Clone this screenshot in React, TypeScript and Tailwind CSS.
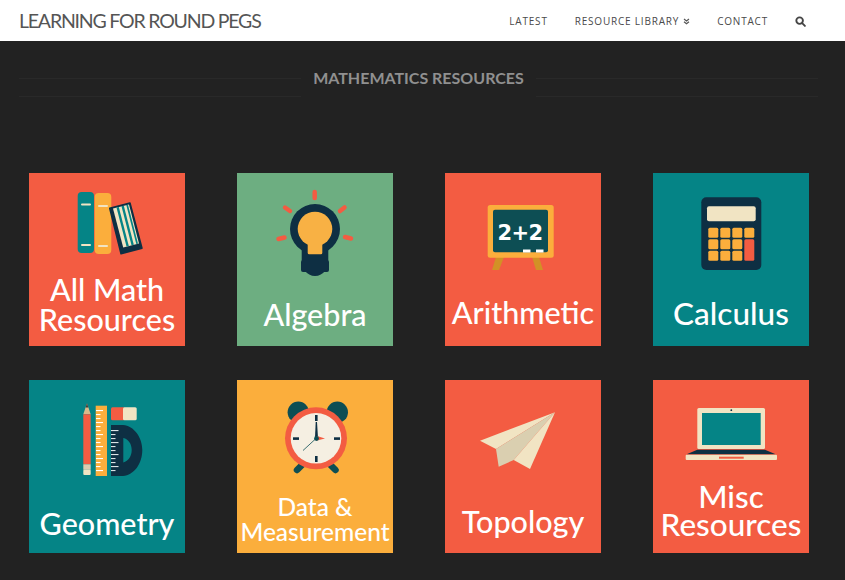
import React from "react";

const RED = "#f35c42";
const TEAL = "#058486";
const YEL = "#fbae3c";
const NAVY = "#0e2f43";
const CREAM = "#f1e4c3";

function Books() {
  return (
    <svg className="block h-[101px] w-full shrink-0">
      <rect x="48.7" y="19" width="16.3" height="61" rx="4" fill={TEAL} />
      <rect x="65.7" y="20" width="16.6" height="61" rx="4" fill={YEL} />
      <rect x="52" y="30.5" width="10" height="2" rx="1" fill={CREAM} />
      <rect x="52" y="71" width="10" height="2" rx="1" fill={CREAM} />
      <rect x="69" y="32" width="10" height="2" rx="1" fill={CREAM} />
      <rect x="69" y="72" width="10" height="2" rx="1" fill={CREAM} />
      <polygon points="80.7,35.3 101,30 113,75.3 92,80.7" fill={NAVY} stroke={NAVY} strokeWidth="1.5" strokeLinejoin="round" />
      <polygon points="84,35.5 100,31.4 110,70.5 94.2,74.6" fill={CREAM} />
      <polygon points="87.5,34.6 89.8,34 99.8,73 97.5,73.6" fill={TEAL} />
      <polygon points="92.5,33.3 94.8,32.7 104.8,71.7 102.5,72.3" fill={TEAL} />
      <polygon points="97.3,32.1 99,31.7 109,70.7 107.3,71.1" fill={TEAL} />
    </svg>
  );
}

function Bulb() {
  return (
    <svg className="block h-[126px] w-full shrink-0">
      <g stroke={RED} strokeWidth="4.5" strokeLinecap="round">
        <line x1="77.7" y1="19" x2="77.7" y2="25" />
        <line x1="48" y1="34.5" x2="53" y2="38" />
        <line x1="107.5" y1="34.5" x2="103" y2="38" />
        <line x1="41.5" y1="66" x2="47.5" y2="64.5" />
        <line x1="108" y1="64" x2="114" y2="65.5" />
      </g>
      <circle cx="78" cy="56" r="25" fill={NAVY} />
      <rect x="64.7" y="70" width="26.6" height="20" rx="3" fill={NAVY} />
      <rect x="64" y="87" width="28" height="12" rx="2" fill={NAVY} />
      <path d="M67 97 H89 Q84 103 78 103 Q72 103 67 97 Z" fill={NAVY} />
      <circle cx="78" cy="56" r="17.3" fill="#f8b144" />
      <rect x="70.7" y="66" width="14.6" height="15.3" rx="1.5" fill="#f8b144" />
    </svg>
  );
}

function Board() {
  return (
    <svg className="block h-[124px] w-full shrink-0">
      <polygon points="51,84 59,84 54,97 47,97" fill="#d29126" />
      <polygon points="87,84 94,84 98,97 91,97" fill="#d29126" />
      <rect x="42.7" y="32" width="66" height="52.7" rx="2.5" fill={YEL} />
      <rect x="48" y="36.7" width="55" height="42.6" rx="2" fill="#0d4e54" />
      <text x="75" y="67" textAnchor="middle" fontSize="21" fontWeight="700" letterSpacing="-0.6" fill="#fff" className="font-['DejaVu_Sans',sans-serif]">2+2</text>
      <rect x="78" y="76.5" width="7.5" height="3" fill="#fff" />
      <rect x="91" y="76.5" width="7.5" height="3" fill="#fff" />
    </svg>
  );
}

function Calc() {
  const xs = [55.3, 67.3, 79.3, 91.3];
  const ys = [54.7, 66.3, 77.7];
  return (
    <svg className="block h-[125px] w-full shrink-0">
      <rect x="48.3" y="24.3" width="60" height="72.7" rx="5" fill={NAVY} />
      <rect x="54" y="33.3" width="48.7" height="15" rx="2" fill={CREAM} />
      {ys.map((y) =>
        xs.map((x) =>
          x === 91.3 && y !== 54.7 ? null : <rect key={`${x}-${y}`} x={x} y={y} width="10" height="10" rx="1.5" fill={YEL} />,
        ),
      )}
      <rect x="91.3" y="66.3" width="10" height="21.4" rx="1.5" fill={RED} />
    </svg>
  );
}

function Geo() {
  const ticks = [30, 34, 38, 42, 46, 50, 54, 58, 62, 66, 70, 74, 78, 82, 86, 90];
  const ticks2 = [50, 54, 58, 62, 66, 70, 74, 78, 82, 86, 90];
  return (
    <svg className="block h-[128px] w-full shrink-0">
      <polygon points="54.3,34.3 58,23.3 61.7,34.3" fill="#d9b98a" />
      <polygon points="56.7,27.5 58,23.3 59.3,27.5" fill="#3b3b3b" />
      <rect x="54.3" y="34.3" width="7.4" height="50" fill={RED} />
      <rect x="54.3" y="84.3" width="7.4" height="5.5" fill="#d9ccb0" />
      <rect x="54.3" y="89.8" width="7.4" height="5.2" rx="1" fill={CREAM} />
      <rect x="66.7" y="25.7" width="11.3" height="70.3" fill={YEL} />
      {ticks.map((y, i) => (
        <rect key={y} x="67" y={y} width={i % 3 === 0 ? 7 : 4.5} height="1.1" fill="#fff" />
      ))}
      <rect x="82" y="27.3" width="14" height="13" rx="1.5" fill={RED} />
      <rect x="94" y="27.3" width="13.7" height="13" rx="1.5" fill={CREAM} />
      <path d="M82 45 H94 C105 46 113.3 57 113.3 70 C113.3 84 105 95 94 96 H82 Z M94.3 58 V82.5 C99.5 81 102.7 76 102.7 70 C102.7 64 99.5 59 94.3 58 Z" fill={NAVY} fillRule="evenodd" />
      {ticks2.map((y, i) => (
        <rect key={y} x="82" y={y} width={i % 3 === 0 ? 7.5 : 4.5} height="1.1" fill="#dbe3e6" />
      ))}
    </svg>
  );
}

function Clock() {
  return (
    <svg className="block h-[114px] w-full shrink-0">
      <circle cx="61.3" cy="32.3" r="10.7" fill="#0d4e54" />
      <circle cx="100.3" cy="32.3" r="10.7" fill="#0d4e54" />
      <line x1="60" y1="90" x2="66" y2="84" stroke="#0d4e54" strokeWidth="6.5" strokeLinecap="round" />
      <line x1="98.5" y1="90" x2="92.5" y2="84" stroke="#0d4e54" strokeWidth="6.5" strokeLinecap="round" />
      <circle cx="79" cy="58.3" r="31" fill={RED} />
      <circle cx="79" cy="58.3" r="25.3" fill="#f5efe2" />
      <g fill={NAVY}>
        <rect x="78" y="35" width="2.6" height="6" />
        <rect x="78" y="76" width="2.6" height="6" />
        <rect x="56" y="57.3" width="6" height="2.6" />
        <rect x="97" y="57.3" width="6" height="2.6" />
        <polygon points="78,58 78.7,42 80,42 81,58" />
      </g>
      <polygon points="80,56 88,58.5 80,60.5" fill={RED} />
      <line x1="79" y1="58.5" x2="66" y2="70.5" stroke="#0d4e54" strokeWidth="0.8" />
      <circle cx="79.5" cy="58.5" r="2.4" fill="#0d4e54" />
    </svg>
  );
}

function Plane() {
  return (
    <svg className="block h-[126px] w-full shrink-0">
      <polygon points="110,32.3 35,60.7 51,69" fill={CREAM} />
      <polygon points="110,32.3 51,69 53.7,86.7 68.7,80" fill="#dacfb0" />
      <polygon points="110,32.3 68.7,80 85,89" fill={CREAM} />
    </svg>
  );
}

function Laptop() {
  return (
    <svg className="block h-[102px] w-full shrink-0">
      <rect x="44.3" y="28" width="67.7" height="41" rx="1.5" fill={CREAM} />
      <rect x="49" y="33" width="58.7" height="32" fill={TEAL} />
      <circle cx="78.3" cy="30.2" r="0.9" fill={NAVY} />
      <polygon points="44.3,69.7 112,69.7 122.7,74.3 33.7,74.3" fill={NAVY} />
      <rect x="32.7" y="74.7" width="91.3" height="5.3" rx="1" fill={CREAM} />
      <rect x="66" y="76.7" width="24.7" height="2" fill={RED} />
    </svg>
  );
}

function Card({ bg, children, label }: { bg: string; children: React.ReactNode; label: React.ReactNode }) {
  return (
    <a className={`flex h-[173px] flex-col overflow-hidden text-center font-medium text-white ${bg}`}>
      {children}
      {label}
    </a>
  );
}

function Rule() {
  return <div className="h-px w-[282px] bg-[#292929]" />;
}

export default function App() {
  return (
    <div className="h-[580px] w-[845px] overflow-hidden bg-[#222222] font-['Lato',sans-serif]">
      <header className="flex h-[41px] items-center justify-between bg-white pl-[19px] pr-[39px]">
        <div className="text-[19.5px] leading-[41px] tracking-[-1.2px] text-[#555555]">LEARNING FOR ROUND PEGS</div>
        <nav className="flex items-center gap-[27px] pt-[2px] font-['Open_Sans',sans-serif] text-[10px] tracking-[0.8px] text-[#4a4a4a]">
          <span>LATEST</span>
          <span className="flex items-center gap-[4px]">
            RESOURCE LIBRARY
            <svg width="7" height="7" viewBox="0 0 7 7" fill="none" stroke="#555" strokeWidth="1.2">
              <path d="M1 1 L3.5 3 L6 1 M1 3.7 L3.5 5.7 L6 3.7" />
            </svg>
          </span>
          <span>CONTACT</span>
          <svg width="11" height="11" viewBox="0 0 10 10" fill="none" stroke="#444" strokeWidth="1.7">
            <circle cx="4.2" cy="4.2" r="3" />
            <line x1="6.5" y1="6.5" x2="9" y2="9" strokeLinecap="round" />
          </svg>
        </nav>
      </header>
      <div className="mt-[27px] flex items-center justify-between pl-[19px] pr-[27px]">
        <Rule />
        <h1 className="text-center text-[16px] font-bold leading-[20px] text-[#909090]">MATHEMATICS RESOURCES</h1>
        <Rule />
      </div>
      <div className="mt-[8px] flex justify-between pl-[19px] pr-[27px]">
        <Rule />
        <Rule />
      </div>
      <main className="mt-[76px] grid grid-cols-[156px_156px_156px_156px] gap-x-[52px] gap-y-[34px] pl-[29px]">
        <Card bg="bg-[#f35c42]" label={<div className="text-[30.5px] leading-[30px]">All Math<br />Resources</div>}>
          <Books />
        </Card>
        <Card bg="bg-[#6dae81]" label={<div className="text-[30.5px] leading-[30px]">Algebra</div>}>
          <Bulb />
        </Card>
        <Card bg="bg-[#f35c42]" label={<div className="text-[30.5px] leading-[30px]">Arithmetic</div>}>
          <Board />
        </Card>
        <Card bg="bg-[#058486]" label={<div className="text-[31.5px] leading-[30px]">Calculus</div>}>
          <Calc />
        </Card>
        <Card bg="bg-[#058486]" label={<div className="text-[30.5px] leading-[30px]">Geometry</div>}>
          <Geo />
        </Card>
        <Card bg="bg-[#fbae3c]" label={<div className="text-[24.5px] leading-[25px]"><span className="block">Data &amp;</span><span className="block">Measurement</span></div>}>
          <Clock />
        </Card>
        <Card bg="bg-[#f35c42]" label={<div className="text-[30.5px] leading-[30px]">Topology</div>}>
          <Plane />
        </Card>
        <Card bg="bg-[#f35c42]" label={<div className="text-[31.5px] leading-[28px]">Misc<br />Resources</div>}>
          <Laptop />
        </Card>
      </main>
    </div>
  );
}
